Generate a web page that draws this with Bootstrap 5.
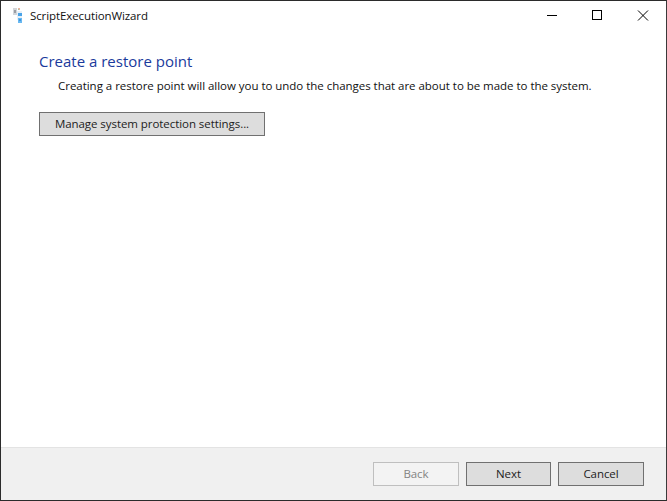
<!DOCTYPE html>
<html lang="en">
<head>
<meta charset="utf-8">
<title>ScriptExecutionWizard</title>
<link href="https://cdn.jsdelivr.net/npm/bootstrap@5.3.0/dist/css/bootstrap.min.css" rel="stylesheet">
<style>
html,body{margin:0;padding:0;height:501px;overflow:hidden;background:#fff}
body{font-family:"Open Sans","Noto Sans","Liberation Sans",sans-serif;font-size:12px;color:#000}
.win{width:667px;height:501px;border:1px solid #2b2b2b;border-right-color:#3a3a3a}
.titlebar{height:29px;padding-left:11px}
.appicon{width:13px;height:16px;margin-right:5px;flex:none}
.ttl{font-size:11.5px;line-height:16px;letter-spacing:-.1px;color:#111}
.ctrls svg{display:block;width:46px;height:29px;flex:none}
.content{padding:21px 38px 0}
.h-main{font-size:15px;line-height:20px;color:#1a3a9c;font-weight:400;margin:0}
.desc{font-size:11.5px;line-height:16px;margin:7px 0 0 19px;letter-spacing:-.03px;white-space:nowrap;color:#111}
.wbtn{font-size:11.5px;line-height:16px;background:#dddddd;border:1px solid #707070;border-radius:0;color:#222;padding:0;height:24px;letter-spacing:-.06px;--bs-btn-font-size:11.5px}
.wbtn.manage{width:226px;margin-top:18px}
.foot{height:53px;background:#f0f0f0;border-top:1px solid #e3e3e3;padding:14px 22px 0 0;gap:7px}
.foot .wbtn{width:86px}
.foot .wbtn.next{width:85px}
.wbtn:disabled{opacity:1;background:#f3f3f3;border-color:#bfbfbf;color:#838383}
</style>
</head>
<body>
<div class="win d-flex flex-column">
  <div class="titlebar d-flex align-items-center">
    <svg class="appicon" viewBox="0 0 13 16" aria-hidden="true">
      <rect x="1" y="0" width="4" height="7" fill="#d3d6da"/>
      <rect x="2" y="2" width="2" height="3" fill="#9a9ea5"/>
      <rect x="6" y="0" width="2" height="2" fill="#eeb39c"/>
      <rect x="6" y="1" width="1" height="1" fill="#9fc8a0"/>
      <rect x="5" y="3" width="5" height="9" fill="#e6f0f8"/>
      <rect x="6" y="5" width="4" height="3" fill="#4aa3e8"/>
      <rect x="6" y="10" width="4" height="5" fill="#6ab8f0"/>
      <rect x="7" y="11" width="2" height="2" fill="#3c98e2"/>
    </svg>
    <span class="ttl">ScriptExecutionWizard</span>
    <div class="ctrls d-flex ms-auto">
      <svg viewBox="0 0 46 29" aria-hidden="true"><path d="M19 14.5h10" stroke="#000" fill="none"/></svg>
      <svg viewBox="0 0 46 29" aria-hidden="true"><rect x="18.5" y="9.5" width="9" height="9" stroke="#000" fill="none"/></svg>
      <svg viewBox="0 0 46 29" aria-hidden="true"><path d="M18 9.5l10 10M28 9.5l-10 10" stroke="#000" fill="none"/></svg>
    </div>
  </div>
  <div class="content flex-grow-1">
    <h1 class="h-main">Create a restore point</h1>
    <p class="desc">Creating a restore point will allow you to undo the changes that are about to be made to the system.</p>
    <button type="button" class="btn wbtn manage d-block">Manage system protection settings...</button>
  </div>
  <div class="foot d-flex justify-content-end">
    <button type="button" class="btn wbtn" disabled>Back</button>
    <button type="button" class="btn wbtn next">Next</button>
    <button type="button" class="btn wbtn">Cancel</button>
  </div>
</div>
<script src="https://cdn.jsdelivr.net/npm/bootstrap@5.3.0/dist/js/bootstrap.bundle.min.js"></script>
</body>
</html>
